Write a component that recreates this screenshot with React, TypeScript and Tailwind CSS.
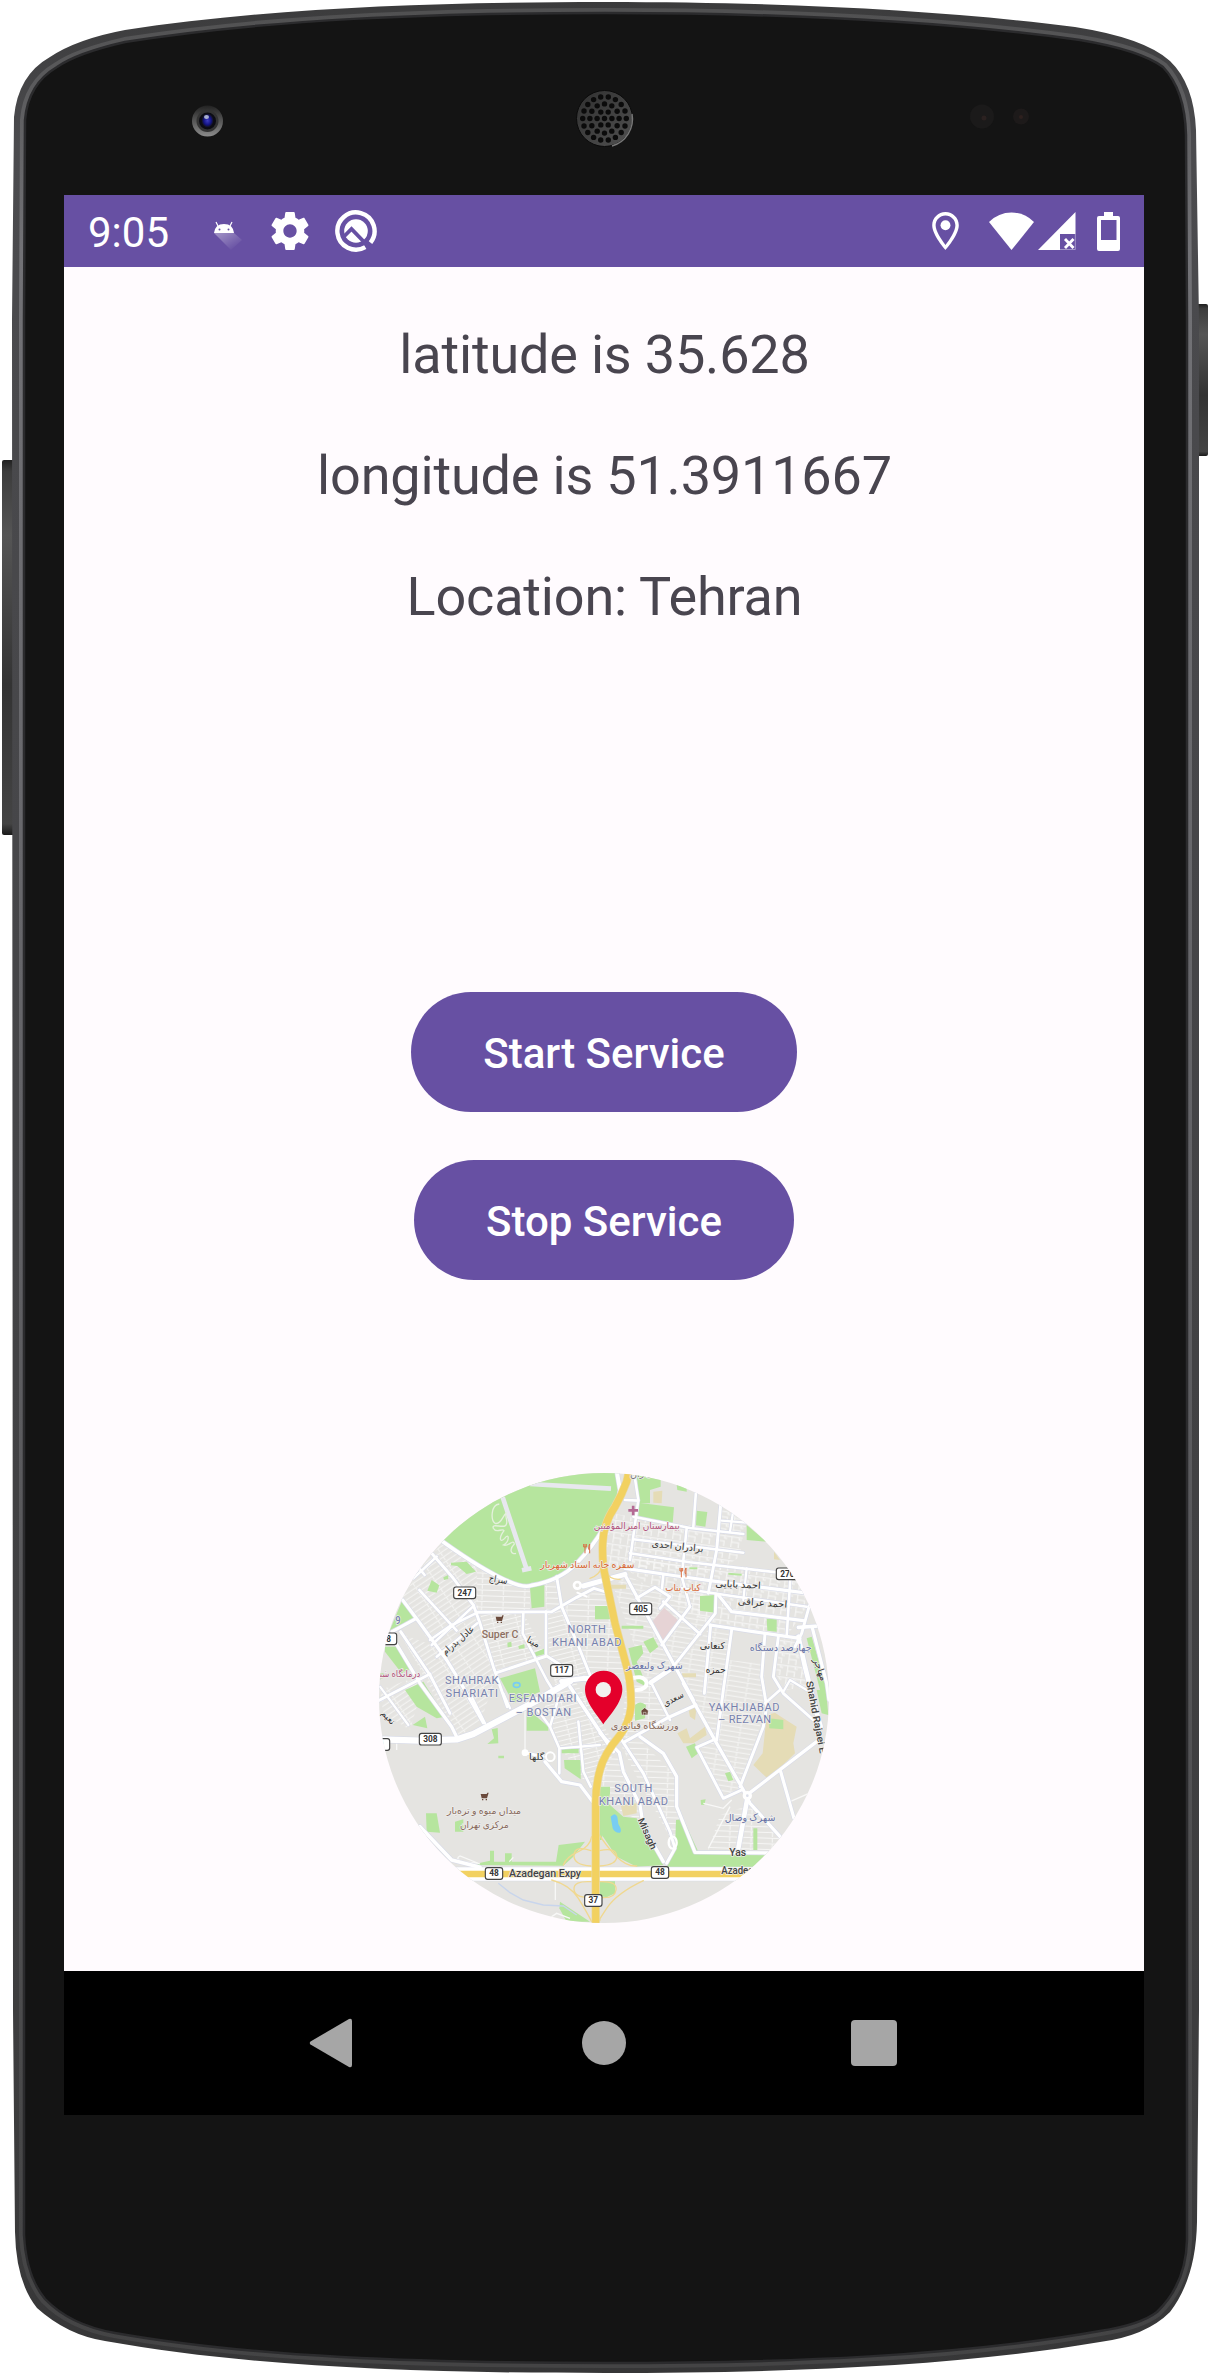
import React from "react";

type Pt = [number, number];

const line = (pts: Pt[]) => "M" + pts.map((p) => p.join(" ")).join("L");

/* Street network: [width, points] */
const ROADS: [number, Pt[]][] = [
  [8, [[185, 280], [250, 355], [310, 435], [330, 490], [370, 620], [412, 740]]],
  [8, [[320, 457], [545, 455], [620, 412], [672, 385], [704, 395]]],
  [9, [[98, 420], [150, 490], [230, 600], [270, 665], [340, 788]]],
  [7, [[148, 390], [260, 512]]],
  [7, [[130, 355], [200, 290]]],
  [7, [[148, 325], [164, 345]]],
  [7, [[185, 555], [312, 437]]],
  [7, [[200, 590], [322, 490]]],
  [7, [[180, 540], [240, 498], [322, 458]]],
  [9, [[66, 515], [134, 478]]],
  [8, [[92, 515], [180, 645], [240, 760]]],
  [9, [[78, 550], [150, 670], [245, 800], [262, 835]]],
  [8, [[380, 638], [530, 588], [580, 620]]],
  [7, [[528, 455], [528, 588]]],
  [7, [[460, 460], [458, 520], [530, 660], [555, 700]]],
  [8, [[560, 350], [575, 440], [630, 570], [662, 650]]],
  [14, [[575, 664], [640, 655], [690, 658]]],
  [8, [[20, 725], [180, 642]]],
  [6, [[30, 680], [115, 795]]],
  [6, [[300, 700], [345, 790]]],
  [6, [[400, 700], [420, 745]]],
  [18, [[30, 838], [150, 842], [262, 838], [310, 822], [500, 722], [600, 664]]],
  [10, [[600, 680], [640, 740], [730, 875]]],
  [7, [[500, 745], [540, 800], [568, 865], [568, 940]]],
  [7, [[565, 715], [540, 800]]],
  [9, [[525, 905], [575, 965], [630, 975], [668, 1025]]],
  [8, [[465, 878], [520, 890]]],
  [6, [[568, 865], [690, 855]]],
  [7, [[625, 785], [640, 935], [662, 980]]],
  [10, [[150, 1100], [245, 1200], [330, 1222]]],
  [11, [[738, 20], [750, 90], [745, 125], [700, 205]]],
  [7, [[794, 50], [805, 120], [780, 300]]],
  [7, [[765, 120], [805, 122]]],
  [7, [[790, 170], [960, 204], [1120, 222]]],
  [7, [[790, 238], [1120, 278]]],
  [7, [[780, 280], [960, 307], [1290, 345]]],
  [9, [[765, 325], [900, 345], [1020, 362], [1300, 398]]],
  [7, [[935, 385], [1080, 407], [1310, 440]]],
  [9, [[1020, 495], [1150, 515], [1290, 535]]],
  [9, [[1045, 405], [1085, 455], [1300, 482]]],
  [7, [[978, 95], [970, 200]]],
  [8, [[1052, 135], [1040, 270], [1015, 400]]],
  [7, [[950, 205], [935, 350], [960, 440]]],
  [7, [[880, 345], [876, 385]]],
  [6, [[1130, 325], [1120, 420]]],
  [6, [[1090, 150], [1080, 215]]],
  [6, [[1055, 182], [1130, 188]]],
  [9, [[765, 345], [850, 500], [940, 665], [970, 720]]],
  [8, [[880, 425], [990, 522]]],
  [8, [[800, 415], [855, 382], [900, 410], [870, 445]]],
  [8, [[875, 555], [960, 440]]],
  [14, [[640, 378], [765, 343]]],
  [8, [[1038, 402], [1036, 460], [910, 620]]],
  [13, [[910, 622], [842, 668]]],
  [7, [[842, 665], [900, 780]]],
  [8, [[1022, 495], [1003, 700]]],
  [8, [[1085, 510], [1060, 690], [1040, 840]]],
  [8, [[1185, 520], [1175, 650], [1190, 740], [1180, 800], [1110, 980]]],
  [8, [[1225, 530], [1210, 650], [1240, 700], [1330, 780]]],
  [6, [[1240, 695], [1260, 660], [1310, 690]]],
  [7, [[1262, 340], [1250, 530]]],
  [8, [[1320, 430], [1295, 520], [1275, 560]]],
  [13, [[1285, 530], [1305, 620], [1335, 740], [1352, 800]]],
  [10, [[1285, 502], [1345, 498]]],
  [9, [[1326, 500], [1370, 670], [1377, 720]]],
  [9, [[690, 820], [748, 878], [760, 935], [810, 1035], [820, 1100], [880, 1205]]],
  [8, [[755, 840], [820, 940], [900, 1115], [915, 1165], [890, 1210]]],
  [9, [[810, 830], [880, 880], [920, 950], [920, 1040], [975, 1177], [1210, 1179]]],
  [9, [[765, 845], [890, 775], [978, 735]]],
  [9, [[940, 670], [1040, 850], [1120, 990], [1140, 1030], [1235, 1135]]],
  [8, [[1030, 840], [980, 862], [1060, 1015], [1115, 990]]],
  [9, [[1140, 998], [1340, 845]]],
  [9, [[1232, 935], [1272, 1075]]],
  [13, [[1132, 1015], [1105, 1165]]],
  [7, [[1230, 690], [1185, 730]]],
];

const GREENS = [
  "M217 245Q300 312 380 350T485 376Q570 362 620 310T700 205Q742 130 745 85V20H180Z",
  "M480 382L523 370V440L485 445Z",
  "M243 308L290 305L318 335L290 342L262 318L243 316Z",
  "M185 360L208 376L200 398L172 392Z",
  "M220 352L235 345V357L222 360Z",
  "M95 425L135 475L60 510Z",
  "M45 560H90L125 625L95 640L45 575Z",
  "M105 690L160 665L225 770L200 775L140 740Z",
  "M60 640L30 660L25 640Z",
  "M128 795L165 770L172 805Z",
  "M390 655L495 625L510 695L430 730Z",
  "M412 548L424 545L425 560L413 562Z",
  "M445 558L463 552L464 565L447 567Z",
  "M490 580L525 565V582L492 590Z",
  "M675 438H715L722 478H675Z",
  "M365 808L383 804L385 850L352 852L372 835Z",
  "M385 887H402V895H385Z",
  "M470 745L535 800V812H470Z",
  "M575 867H626V880H575Z",
  "M582 900H632V958L584 925Z",
  "M168 1060H200L210 1118L170 1115Z",
  "M255 1085L280 1078V1115H255Z",
  "M300 1215L360 1202V1172H372V1205H405V1180H425V1205H558L566 1155L645 1145L610 1190L580 1217Z",
  "M570 1325L660 1385H590L568 1345Z",
  "M690 980H720V1000L695 1140H690Z",
  "M692 1010L760 1070L800 1075L880 1215L800 1220L740 1190L692 1120Z",
  "M918 1080L940 1078L985 1175L1190 1180L1150 1222H890L915 1170Z",
  "M690 1262H735V1300L710 1312L690 1308Z",
  "M800 40L872 55V80L840 90V130H806Z",
  "M805 128L912 142L908 190L805 178Z",
  "M920 75L950 80V95L922 90Z",
  "M980 152L1012 156L1006 200L978 196Z",
  "M1130 195L1190 245L1130 240Z",
  "M990 408L1034 405V458L990 452Z",
  "M1190 476L1220 478V515L1192 512Z",
  "M775 565L815 555L820 580L800 605L815 640L830 680L800 665Z",
  "M820 545L850 532L865 560L840 580Z",
  "M1310 535L1325 530L1375 700L1350 690Z",
  "M1340 690H1368L1375 765L1355 760Z",
  "M1197 775L1240 780V808L1198 805Z",
  "M795 735Q810 720 828 735L825 775L795 782Z",
  "M948 860L975 850L985 880L965 895Z",
  "M1065 940L1080 935L1090 960L1075 964Z",
  "M1150 1105H1162V1170H1150Z",
  "M992 1020L1007 1018L1003 1035L993 1034Z",
  "M725 1085H760L755 1110L730 1108Z",
  "M755 497H820V506H755Z",
  "M1075 338L1115 341V347L1075 344Z",
  "M958 322H982V328H958Z",
];

const BLOCKS: [string, string][] = [
  ["a", "M215 250L320 315L325 455L185 555L95 415L150 330Z"],
  ["h", "M320 325L400 362L480 380V450H320Z"],
  ["h", "M525 370L560 350L575 440L528 450Z"],
  ["a", "M185 555L320 465L385 630L330 790L262 830L90 520Z"],
  ["a", "M30 690L170 640L120 810L40 760Z"],
  ["d", "M330 460H460L530 590L380 635Z"],
  ["d", "M528 460L575 440L630 570L660 650L560 700L540 600Z"],
  ["h", "M575 440L700 385L770 640L660 650Z"],
  ["d", "M510 700L620 670L740 860L690 970L640 960L570 860Z"],
  ["e", "M720 160L1120 220L1110 290L1050 330L700 320Z"],
  ["e", "M780 280L1290 340L1310 440L1250 530L1020 495L780 335Z"],
  ["e", "M1050 140L1130 190L1120 225L1050 215Z"],
  ["b", "M770 345L850 385L1030 400L1036 460L910 620L830 660L730 380Z"],
  ["b", "M1022 500L1083 512L1060 680L1040 840L942 665L910 630Z"],
  ["b", "M1070 600L1180 610L1190 740L1112 970L1045 840Z"],
  ["h", "M770 660L840 670L890 770L750 850Z"],
  ["h", "M750 850L810 840L920 950V1040L975 1180L915 1160L800 950Z"],
  ["h", "M690 890L750 890L800 1010L810 1080L760 1060L695 1010Z"],
  ["b", "M985 865L1035 845L1115 985L1062 1010Z"],
  ["h", "M1050 1065L1140 1035L1230 1135L1200 1170H1015Z"],
  ["e", "M1225 535L1290 540L1320 680L1250 690L1215 640Z"],
];

const Shield = ({ x, y, w = 66, t }: { x: number; y: number; w?: number; t: string }) => (
  <g>
    <rect x={x - w / 2} y={y - 17} width={w} height={35} rx={7} fill="#fff" stroke="#444" strokeWidth={3.5} />
    <text x={x} y={y + 9} textAnchor="middle" fontSize={25} fontWeight={700} fill="#333" fontFamily="Roboto, sans-serif">
      {t}
    </text>
  </g>
);

const Label = ({
  x, y, t, w, c = "#7681ae", s = 34, r = 0, spaced = false,
}: { x: number; y: number; t: string; w: number; c?: string; s?: number; r?: number; spaced?: boolean }) => (
  <text
    x={x} y={y} textAnchor="middle" fontSize={s} fill={c} fontWeight={spaced ? 400 : 500}
    stroke="#f0efed" strokeWidth={4} paintOrder="stroke" strokeLinejoin="round"
    textLength={w} lengthAdjust={spaced ? "spacing" : "spacingAndGlyphs"}
    transform={r ? `rotate(${r} ${x} ${y})` : undefined}
    fontFamily="Roboto, 'DejaVu Sans', sans-serif"
  >
    {t}
  </text>
);

const Cart = ({ x, y }: { x: number; y: number }) => (
  <path transform={`translate(${x} ${y})`} d="M-11 -8H7L9 -12H13L8 5H-8ZM-7 7H-3V11H-7ZM4 7H8V11H4Z" fill="#6b4a3c" />
);

const Fork = ({ x, y }: { x: number; y: number }) => (
  <path transform={`translate(${x} ${y})`} d="M-7 -14V-5M-3 -14V-5M-11 -14V-5H-3M-7 -5V14M7 14V-14Q3 -8 4 2H7" fill="none" stroke="#d97045" strokeWidth={3} />
);

const MapView = () => (
  <svg viewBox="27 39 1350 1350" className="size-[450px]">
    <defs>
      <pattern id="a" width="60" height="15" patternUnits="userSpaceOnUse" patternTransform="rotate(-34)">
        <path d="M0 4H60M20 4V15" stroke="#f8f8f7" strokeWidth="2.6" />
      </pattern>
      <pattern id="d" width="70" height="14" patternUnits="userSpaceOnUse" patternTransform="rotate(-14)">
        <path d="M0 4H70M30 4V14" stroke="#f8f8f7" strokeWidth="2.6" />
      </pattern>
      <pattern id="h" width="64" height="17" patternUnits="userSpaceOnUse" patternTransform="rotate(2)">
        <path d="M0 4H64M30 4V17" stroke="#f8f8f7" strokeWidth="2.8" />
      </pattern>
      <pattern id="b" width="60" height="15" patternUnits="userSpaceOnUse" patternTransform="rotate(9)">
        <path d="M0 4H60M24 4V15" stroke="#f8f8f7" strokeWidth="2.6" />
      </pattern>
      <pattern id="e" width="44" height="36" patternUnits="userSpaceOnUse" patternTransform="rotate(8)">
        <path d="M0 5H44M8 5V36M8 21H30V36M30 5V12H38" stroke="#f8f8f7" strokeWidth="3" fill="none" />
      </pattern>
    </defs>
    <rect x="0" y="0" width="1410" height="1410" fill="#e5e4e1" />
    {BLOCKS.map(([id, d], i) => (
      <path key={i} d={d} fill={`url(#${id})`} />
    ))}
    {GREENS.map((d, i) => (
      <path key={i} d={d} fill="#b6e59e" />
    ))}
    <g fill="#e5dcb6">
      <path d="M1190 765L1215 758L1240 775L1280 800L1270 850L1275 880L1195 958L1150 915L1178 880Z" />
      <path d="M850 95L877 92L875 130L850 128Z" />
      <path d="M1212 275L1230 300L1212 298Z" />
      <path d="M922 820L950 805L960 835L1005 800L1010 825L970 850L940 850Z" />
      <path d="M936 640H978V652H936Z" />
      <path d="M720 374H768V386H720Z" />
      <path d="M752 1035L800 1030V1060L760 1068Z" />
      <path d="M955 745L980 740L975 780L960 770Z" />
    </g>
    <path d="M1197 775L1240 780V808L1198 805Z" fill="#b6e59e" />
    <path d="M843 490L882 443L926 482L880 548Z" fill="#e6d3d5" />
    <path d="M722 1070Q735 1055 742 1070L745 1092Q758 1112 750 1118Q735 1120 728 1105Z" fill="#78cdf2" />
    <ellipse cx="440" cy="675" rx="10" ry="7" fill="#b6e59e" stroke="#78cdf2" strokeWidth="5" />
    <path d="M385 1270L420 1298L460 1320L520 1335L580 1338L620 1365" fill="none" stroke="#c8d5ec" strokeWidth="4" />
    <g fill="none" stroke="#e8e8ef" strokeWidth="14">
      <path d="M480 72L723 86" />
      <path d="M398 112L470 328M456 331L484 325" />
    </g>
    <path
      d="M388 132C362 135 362 180 375 190C392 195 398 168 408 160C405 175 418 190 405 198C390 202 365 190 370 205C378 222 398 203 402 212C385 235 390 250 404 235C418 215 420 245 400 255C415 262 430 235 433 252C415 270 425 285 438 280"
      fill="none" stroke="#e4f0dc" strokeWidth="4"
    />
    <path d="M418 1205L430 1192M556 1260V1320M530 1380L560 1360L600 1375M330 1212L270 1188Q255 1195 275 1205L325 1210M1015 1165L1080 1040M1000 1030L1060 1045L1085 1020M1260 1025L1340 990M465 750V875M80 850V870" fill="none" stroke="#f8f8f7" strokeWidth="4" />

    <g fill="none" strokeLinecap="round" strokeLinejoin="round">
      <g stroke="#d8dbe8">
        {ROADS.map(([w, p], i) => (
          <path key={i} d={line(p)} strokeWidth={w + 4.5} />
        ))}
        <path d="M200 232Q310 312 385 350T485 376Q570 362 620 310T700 205" strokeWidth="15" />
        <path d="M240 1227H1230M240 1257H1230" strokeWidth="13" />
      </g>
      <g stroke="#fff">
        {ROADS.map(([w, p], i) => (
          <path key={i} d={line(p)} strokeWidth={w + 0.8} />
        ))}
        <path d="M200 232Q310 312 385 350T485 376Q570 362 620 310T700 205" strokeWidth="11" />
        <path d="M240 1227H1230M240 1257H1230" strokeWidth="10" />
        <path d="M770 660Q820 640 830 668Q830 688 800 690" strokeWidth="12" />
        <circle cx="622" cy="376" r="10" strokeWidth="8" />
        <path d="M622 398L650 410" strokeWidth="6" />
        <ellipse cx="908" cy="1148" rx="12" ry="18" strokeWidth="7" />
      </g>
      <circle cx="541" cy="890" r="13" fill="#e5e4e1" stroke="#fff" strokeWidth="6" />
      <circle cx="1132" cy="1007" r="9" fill="#dcdfe9" stroke="#fff" strokeWidth="10" />
      <circle cx="465" cy="878" r="10" fill="#fff" stroke="none" />
      <g stroke="#f0d890" strokeWidth="4">
        <path d="M665 1130Q660 1160 625 1175T580 1215M685 1120Q710 1160 740 1190T800 1218M545 1260Q600 1275 625 1315T665 1385M820 1262Q740 1300 710 1345T690 1380" />
        <path d="M663 1218Q610 1215 612 1185T663 1172M688 1218Q742 1215 740 1188T688 1172M663 1265Q610 1262 612 1288T663 1312M688 1265Q742 1262 738 1290T688 1312" />
        <path d="M660 355Q690 345 695 320M705 335Q720 360 750 358" />
      </g>
      <g>
        <path d="M240 1242H1230" stroke="#fff" strokeWidth="24" />
        <path d="M240 1242H1230" stroke="#f2d160" strokeWidth="19" />
        <path d="M780 20L770 65Q755 105 735 140Q700 190 698 250Q696 310 706 350L735 490L770 620Q784 670 783 740Q778 790 748 828Q700 885 690 930Q677 975 677 1030V1400" stroke="#e8d9a4" strokeWidth="25" />
        <path d="M780 20L770 65Q755 105 735 140Q700 190 698 250Q696 310 706 350L735 490L770 620Q784 670 783 740Q778 790 748 828Q700 885 690 930Q677 975 677 1030V1400" stroke="#f2d160" strokeWidth="21" />
      </g>
    </g>

    <Shield x={284} y={398} t="247" />
    <Shield x={575} y={631} t="117" />
    <Shield x={812} y={446} t="405" />
    <Shield x={181} y={837} t="308" />
    <Shield x={372} y={1240} w={52} t="48" />
    <Shield x={870} y={1237} w={52} t="48" />
    <Shield x={670} y={1321} w={52} t="37" />
    <Shield x={1252} y={341} t="270" />
    <Shield x={49} y={536} w={62} t="18" />
    <Shield x={28} y={853} w={62} t="11" />

    <Label spaced x={650} y={518} w={115} t="NORTH" s={33} />
    <Label spaced x={650} y={557} w={208} t="KHANI ABAD" s={33} />
    <Label spaced x={305} y={673} w={160} t="SHAHRAK" s={33} />
    <Label spaced x={305} y={712} w={157} t="SHARIATI" s={33} />
    <Label spaced x={518} y={727} w={203} t="ESFANDIARI" s={33} />
    <Label spaced x={520} y={767} w={166} t="– BOSTAN" s={33} />
    <Label spaced x={790} y={995} w={114} t="SOUTH" s={33} />
    <Label spaced x={790} y={1034} w={208} t="KHANI ABAD" s={33} />
    <Label spaced x={1122} y={752} w={212} t="YAKHJIABAD" s={33} />
    <Label spaced x={1124} y={790} w={158} t="– REZVAN" s={33} />
    <Label x={390} y={534} w={110} t="Super C" c="#8d6f62" />
    <Label x={525} y={1251} w={216} t="Azadegan Expy" c="#444" s={31} />
    <Label x={1118} y={1241} w={128} t="Azadegan" c="#444" s={31} />
    <Label x={1103} y={1188} w={50} t="Yas" c="#444" s={31} />
    <Label x={823} y={1125} w={100} t="Misagh" c="#444" s={29} r={66} />
    <Label x={1329} y={773} w={220} t="Shahid Rajaei E" c="#444" s={29} r={79} />
    <Label x={84} y={492} w={16} t="9" s={30} />

    <Label x={800} y={208} w={258} t="بیمارستان امیرالمؤمنین" c="#b0527c" s={29} />
    <Label x={652} y={324} w={282} t="سفره خانه استاد شهریار" c="#d6652f" s={29} />
    <Label x={939} y={392} w={106} t="کباب بناب" c="#d6652f" s={29} />
    <Label x={922} y={268} w={156} t="برادران احدی" c="#333" s={29} r={6} />
    <Label x={1104} y={383} w={136} t="احمد بابایی" c="#333" s={29} r={3} />
    <Label x={1177} y={438} w={148} t="احمد عراقی" c="#333" s={29} r={4} />
    <Label x={1027} y={566} w={76} t="کنعانی" c="#333" s={29} />
    <Label x={1037} y={639} w={60} t="حمزه" c="#333" s={29} />
    <Label x={1232} y={573} w={186} t="چهارصد دستگاه" c="#6571a6" s={29} />
    <Label x={853} y={627} w={170} t="شهرک ولیعصر" c="#6571a6" s={29} />
    <Label x={824} y={807} w={204} t="ورزشگاه قیانوری" c="#85675a" s={29} />
    <Label x={914} y={725} w={66} t="سعدی" c="#333" s={28} r={-28} />
    <Label x={1140} y={1083} w={152} t="شهرک وصال" c="#6571a6" s={29} />
    <Label x={342} y={1063} w={222} t="میدان میوه و تره‌بار" c="#85675a" s={29} />
    <Label x={343} y={1103} w={146} t="مرکزی تهران" c="#85675a" s={29} />
    <Label x={383} y={368} w={56} t="سراج" c="#333" s={28} r={10} />
    <Label x={270} y={548} w={118} t="عادل پدرام" c="#333" s={28} r={-41} />
    <Label x={486} y={554} w={40} t="مینا" c="#333" s={28} r={28} />
    <Label x={500} y={900} w={46} t="گلها" c="#333" s={28} />
    <Label x={76} y={652} w={150} t="درمانگاه شبانه" c="#b0527c" s={28} />
    <Label x={48} y={778} w={48} t="نعیم" c="#333" s={27} r={48} />
    <Label x={1342} y={632} w={70} t="مهاجر" c="#333" s={28} r={70} />
    <Label x={810} y={50} w={60} t="یاران" c="#777" s={26} />

    <path d="M775 151H804M789.500 137V166" fill="none" stroke="#b46a94" strokeWidth="8" />
    <Fork x={652} y={266} />
    <Fork x={941} y={338} />
    <Cart x={388} y={478} />
    <Cart x={343} y={1010} />
    <path d="M813 752L824 743L835 752L833 765H815ZM820 765V757H828V765" fill="#6b4a3c" stroke="#f3f2f0" strokeWidth="1.5" />

    <path d="M700 793C684 767 645 728 645 688A56 56 0 0 1 757 688C757 728 718 767 700 793Z" fill="#e4002b" />
    <circle cx="700" cy="689" r="23" fill="#f2f1f0" />
  </svg>
);

const OUTER =
  "M605 2C790 2 950 11 1075 27Q1145 38 1170 61Q1194 84 1196 130L1199 320V2010L1197 2222Q1196 2278 1170 2312Q1146 2336 1100 2342C960 2366 790 2373 605 2373C420 2373 250 2367 105 2341Q67 2335 37 2308Q16 2282 15 2232L13 2010L12 320L14 117Q18 75 50 57Q77 39 125 30C270 8 430 2 605 2Z";
const INNER =
  "M605 13C790 13 950 22 1080 40Q1140 50 1163 67Q1185 90 1186 135L1187 320V2240Q1186 2284 1157 2312Q1140 2325 1100 2331C960 2356 790 2363 605 2363C420 2363 250 2357 115 2333Q70 2325 45 2299Q26 2276 24 2235L24 320L25 120Q28 84 57 67Q77 53 125 42C270 19 430 13 605 13Z";

const holes: Pt[] = [[0, 0]];
([[7.4, 6], [14.6, 12], [21.8, 18]] as Pt[]).forEach(([r, n]) => {
  for (let i = 0; i < n; i++) {
    const a = (i / n) * Math.PI * 2;
    holes.push([+(r * Math.cos(a)).toFixed(2), +(r * Math.sin(a)).toFixed(2)]);
  }
});

const PhoneShell = () => (
  <svg viewBox="0 0 1210 2375" className="absolute inset-0 h-full w-full" aria-hidden>
    <defs>
      <linearGradient id="rim" x1="0" x2="0" y1="0" y2="1">
        <stop offset="0" stopColor="#3b3b3c" />
        <stop offset=".06" stopColor="#4b4b4e" />
        <stop offset=".3" stopColor="#47474a" />
        <stop offset=".9" stopColor="#3c3c3d" />
        <stop offset="1" stopColor="#363637" />
      </linearGradient>
      <linearGradient id="edge" x1="0" x2="0" y1="0" y2="1">
        <stop offset="0" stopColor="#515152" />
        <stop offset=".1" stopColor="#727276" />
        <stop offset=".5" stopColor="#626266" />
        <stop offset=".9" stopColor="#484849" />
        <stop offset="1" stopColor="#444445" />
      </linearGradient>
      <linearGradient id="key" x1="0" x2="0" y1="0" y2="1">
        <stop offset="0" stopColor="#202020" />
        <stop offset=".03" stopColor="#3c3c3c" />
        <stop offset=".2" stopColor="#555" />
        <stop offset=".6" stopColor="#333" />
        <stop offset=".97" stopColor="#444" />
        <stop offset="1" stopColor="#1a1a1a" />
      </linearGradient>
      <linearGradient id="cam" x1="0" x2="0" y1="0" y2="1">
        <stop offset="0" stopColor="#222" />
        <stop offset="1" stopColor="#8b8b8b" />
      </linearGradient>
      <linearGradient id="spk" x1="0" x2="1" y1="0" y2="1">
        <stop offset="0" stopColor="#303030" />
        <stop offset="1" stopColor="#505050" />
      </linearGradient>
      <radialGradient id="lens">
        <stop offset="0" stopColor="#3d3dc0" />
        <stop offset=".6" stopColor="#141486" />
        <stop offset="1" stopColor="#111" />
      </radialGradient>
    </defs>
    <rect x="2" y="460" width="13" height="375" rx="2" fill="url(#key)" />
    <rect x="1194" y="304" width="14" height="152" rx="2" fill="url(#key)" />
    <path d={OUTER} fill="url(#rim)" />
    <path d={INNER} fill="#141414" stroke="url(#edge)" strokeWidth="10" />
    <path d={INNER} fill="#141414" stroke="#2b2b2d" strokeWidth="2.5" />

    <circle cx="207.5" cy="121" r="15.5" fill="url(#cam)" />
    <circle cx="207.5" cy="121" r="11" fill="#333" />
    <circle cx="207.5" cy="121" r="8.5" fill="#0c0c14" />
    <ellipse cx="207.5" cy="120.5" rx="6" ry="7" fill="url(#lens)" />
    <ellipse cx="206.5" cy="117" rx="2.5" ry="2" fill="#a9b0d0" />

    <circle cx="604.5" cy="118.5" r="28" fill="url(#spk)" stroke="#0a0a0a" strokeWidth="1" />
    <path d="M612 146A28 28 0 0 0 632 114" fill="none" stroke="#777" strokeWidth="1.5" />
    {holes.map(([x, y], i) => (
      <circle key={i} cx={604.5 + x} cy={118.5 + y} r="2.7" fill="#0b0b0b" />
    ))}

    <circle cx="982" cy="116.5" r="12" fill="#1b1a1a" />
    <circle cx="984" cy="118" r="2.5" fill="#2b2120" />
    <circle cx="1021" cy="116.5" r="8" fill="#1d1a1a" />
    <circle cx="1021" cy="117" r="2" fill="#2e201e" />
  </svg>
);

const StatusBar = () => (
  <div className="flex h-[72px] items-center bg-[#6750a3] pr-6 pl-6 text-white">
    <span className="w-[82px] pt-[3px] text-[42px] leading-[69px] whitespace-nowrap">9:05</span>
    <svg viewBox="0 0 30 30" className="ml-[43px] h-[30px] w-[30px] translate-y-1">
      <defs>
        <linearGradient id="shade" x1="0" y1="0" x2="1" y2="1">
          <stop offset="0" stopColor="#fff" stopOpacity=".4" />
          <stop offset=".85" stopColor="#fff" stopOpacity="0" />
        </linearGradient>
      </defs>
      <path d="M1 13H21L29 20L18 30Z" fill="url(#shade)" />
      <path d="M1 13Q2 4 11 4T21 13Z" fill="#fff" />
      <path d="M5 6L3 2M17 6L19 2" stroke="#fff" strokeWidth="1.2" />
      <circle cx="6.5" cy="9.5" r="1" fill="#6750a3" />
      <circle cx="15.5" cy="9.5" r="1" fill="#6750a3" />
    </svg>
    <svg viewBox="2.2 2 19.6 20" className="ml-7 h-[38px] w-[38px]" fill="#fff">
      <path d="M19.43 12.98c.04-.32.07-.64.07-.98s-.03-.66-.07-.98l2.11-1.65c.19-.15.24-.42.12-.64l-2-3.46c-.12-.22-.39-.3-.61-.22l-2.49 1c-.52-.4-1.08-.73-1.69-.98l-.38-2.65C14.46 2.18 14.25 2 14 2h-4c-.25 0-.46.18-.49.42l-.38 2.65c-.61.25-1.17.59-1.69.98l-2.49-1c-.23-.09-.49 0-.61.22l-2 3.46c-.13.22-.07.49.12.64l2.11 1.65c-.04.32-.07.65-.07.98s.03.66.07.98l-2.11 1.65c-.19.15-.24.42-.12.64l2 3.46c.12.22.39.3.61.22l2.49-1c.52.4 1.08.73 1.69.98l.38 2.65c.03.24.24.42.49.42h4c.25 0 .46-.18.49-.42l.38-2.65c.61-.25 1.17-.59 1.69-.98l2.49 1c.23.09.49 0 .61-.22l2-3.46c.12-.22.07-.49-.12-.64l-2.11-1.65zM12 15.5c-1.93 0-3.5-1.57-3.5-3.5s1.57-3.5 3.5-3.5 3.5 1.57 3.5 3.5-1.57 3.5-3.5 3.5z" />
    </svg>
    <svg viewBox="0 0 42 42" className="ml-[26px] size-[42px]">
      <path d="M30.3 37.1A18.6 18.6 0 1 1 35.500 32.600" fill="none" stroke="#fff" strokeWidth="4.4" />
      <circle cx="21" cy="21" r="11.8" fill="#fff" />
      <path d="M8.500 27L16.500 19L33 36" fill="none" stroke="#6750a3" strokeWidth="3.8" />
    </svg>
    <div className="flex-1" />
    <svg viewBox="5 2 14 20" className="h-[38px] w-[27px]" fill="#fff">
      <path d="M12 2C8.13 2 5 5.13 5 9c0 5.25 7 13 7 13s7-7.75 7-13c0-3.87-3.13-7-7-7zM6.8 9c0-2.87 2.33-5.2 5.2-5.2s5.2 2.33 5.2 5.2c0 2.98-2.98 7.5-5.2 10.4C9.8 16.5 6.8 11.9 6.8 9z" />
      <circle cx="12" cy="9" r="2.6" />
    </svg>
    <svg viewBox="0 0 45 38" className="ml-[30px] h-[38px] w-[45px]" fill="#fff">
      <path d="M22.500 38L0 10Q9.500 0.500 22.500 0.500T45 10Z" />
    </svg>
    <svg viewBox="0 0 38 38" className="ml-1 size-[38px]" fill="#fff">
      <path d="M0 38L37.500 0V22H22V38Z" />
      <path d="M22 37.500H37.300V22" fill="none" stroke="#fff" strokeOpacity=".5" strokeWidth=".8" />
      <path d="M27 27L35.500 36M35.500 27L27 36" stroke="#fff" strokeWidth="2.800" />
    </svg>
    <svg viewBox="0 0 23 39" className="ml-[21px] h-[39px] w-[23px]" fill="#fff">
      <path fillRule="evenodd" d="M7 0H16V4H21Q23 4 23 6V37Q23 39 21 39H2Q0 39 0 37V6Q0 4 2 4H7ZM4 8V28H19.500V8Z" />
    </svg>
  </div>
);

const NavBar = () => (
  <div className="flex h-36 items-center bg-black pl-[245px]">
    <svg viewBox="0 0 43 50" className="h-[50px] w-[43px]" fill="#a6a6a6">
      <path d="M1.500 23.500Q0 25 1.500 26.500L40 49Q43 50 43 47V3Q43 0 40 1Z" />
    </svg>
    <div className="ml-[230px] size-11 rounded-full bg-[#a6a6a6]" />
    <div className="ml-[225px] size-[46px] rounded-[4px] bg-[#a6a6a6]" />
  </div>
);

export default function App() {
  return (
    <div className="relative h-[2375px] w-[1210px] overflow-hidden bg-white font-[Roboto,sans-serif]">
      <PhoneShell />
      <main className="relative flex h-full flex-col pt-[195px] pr-[66px] pb-[260px] pl-16">
        <StatusBar />
        <section className="flex flex-1 flex-col items-center bg-[#fffbfe] pt-[27px] text-[54px] tracking-[-0.18px] text-[#49454f]">
          <p className="flex h-[121px] items-center pl-px">latitude is 35.628</p>
          <p className="flex h-[121px] items-center pl-px">longitude is 51.3911667</p>
          <p className="flex h-[121px] items-center pl-px">Location: Tehran</p>
          <button className="mt-[335px] h-[120px] w-[386px] rounded-full bg-[#6750a3] pt-0.5 text-[42px] font-medium tracking-normal text-white">
            Start Service
          </button>
          <button className="mt-12 h-[120px] w-[380px] rounded-full bg-[#6750a3] pt-0.5 text-[42px] font-medium tracking-normal text-white">
            Stop Service
          </button>
          <div className="mt-[193px] size-[450px] overflow-hidden rounded-full">
            <MapView />
          </div>
        </section>
        <NavBar />
      </main>
    </div>
  );
}
